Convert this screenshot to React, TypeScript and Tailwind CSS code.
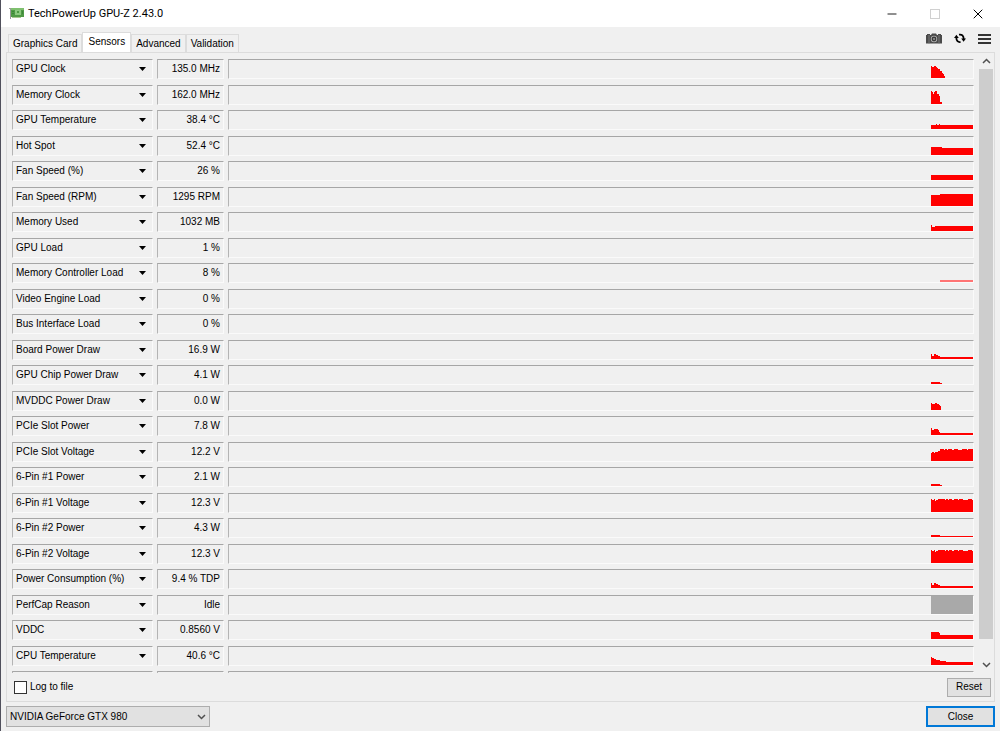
import { useState } from "react";
import { Minus, X } from "lucide-react";

type Step = [x: number, height: number];

interface Sensor {
  name: string;
  value: string;
  steps?: Step[];
  color?: string;
}

const GRAPH_WIDTH = 42;
const GRAPH_HEIGHT = 18;

const sensors: Sensor[] = [
  {
    name: "GPU Clock",
    value: "135.0 MHz",
    steps: [[0, 12], [1, 11], [3, 12], [5, 11], [6, 10], [7, 9], [9, 7], [11, 5], [12, 4], [13, 2], [14, 0]],
  },
  {
    name: "Memory Clock",
    value: "162.0 MHz",
    steps: [[0, 13], [1, 12], [2, 10], [3, 12], [4, 13], [6, 10], [8, 8], [9, 2], [11, 0]],
  },
  { name: "GPU Temperature", value: "38.4 °C", steps: [[0, 4], [5, 5], [6, 4], [8, 5], [9, 4]] },
  { name: "Hot Spot", value: "52.4 °C", steps: [[0, 8], [11, 7]] },
  { name: "Fan Speed (%)", value: "26 %", steps: [[0, 5]] },
  { name: "Fan Speed (RPM)", value: "1295 RPM", steps: [[0, 11], [9, 12]] },
  { name: "Memory Used", value: "1032 MB", steps: [[0, 6], [1, 4], [4, 5]] },
  { name: "GPU Load", value: "1 %" },
  { name: "Memory Controller Load", value: "8 %", steps: [[9, 2]], color: "#ff7474" },
  { name: "Video Engine Load", value: "0 %" },
  { name: "Bus Interface Load", value: "0 %" },
  { name: "Board Power Draw", value: "16.9 W", steps: [[0, 5], [1, 3], [3, 5], [5, 4], [7, 3], [9, 2]] },
  { name: "GPU Chip Power Draw", value: "4.1 W", steps: [[0, 2], [9, 1], [11, 0]] },
  { name: "MVDDC Power Draw", value: "0.0 W", steps: [[0, 7], [1, 6], [4, 7], [6, 6], [8, 5], [9, 4], [10, 0]] },
  { name: "PCIe Slot Power", value: "7.8 W", steps: [[0, 7], [1, 5], [3, 6], [7, 5], [8, 3], [9, 2]] },
  {
    name: "PCIe Slot Voltage",
    value: "12.2 V",
    steps: [[0, 8], [1, 9], [3, 8], [4, 9], [7, 10], [9, 12], [13, 11], [14, 12], [16, 11], [17, 12], [21, 11], [23, 12], [27, 11], [31, 12], [36, 11], [37, 12]],
  },
  { name: "6-Pin #1 Power", value: "2.1 W", steps: [[0, 2], [9, 1], [11, 0]] },
  {
    name: "6-Pin #1 Voltage",
    value: "12.3 V",
    steps: [[0, 13], [1, 12], [3, 13], [4, 11], [5, 12], [7, 13], [14, 12], [15, 13], [17, 12], [18, 13], [21, 12], [23, 13], [27, 12], [28, 13], [32, 12], [37, 13], [41, 12]],
  },
  { name: "6-Pin #2 Power", value: "4.3 W", steps: [[0, 2], [9, 1]] },
  {
    name: "6-Pin #2 Voltage",
    value: "12.3 V",
    steps: [[0, 13], [1, 12], [3, 13], [4, 11], [5, 12], [7, 13], [14, 12], [15, 13], [17, 12], [18, 13], [21, 12], [23, 13], [27, 12], [28, 13], [32, 12], [37, 13], [41, 12]],
  },
  { name: "Power Consumption (%)", value: "9.4 % TDP", steps: [[0, 5], [1, 3], [3, 5], [5, 4], [7, 3], [9, 2]] },
  { name: "PerfCap Reason", value: "Idle", steps: [[0, 18]], color: "#a9a9a9" },
  { name: "VDDC", value: "0.8560 V", steps: [[0, 7], [8, 6], [9, 4]] },
  {
    name: "CPU Temperature",
    value: "40.6 °C",
    steps: [[0, 8], [1, 7], [3, 6], [5, 5], [9, 4], [15, 3]],
  },
  { name: "", value: "" },
];

const tabs = ["Graphics Card", "Sensors", "Advanced", "Validation"];

function stepPath(steps: Step[]) {
  const line = steps
    .map(([x, height]) => `H${x}V${GRAPH_HEIGHT - height}`)
    .join("");
  return `M${steps[0][0]} ${GRAPH_HEIGHT}${line}H${GRAPH_WIDTH}V${GRAPH_HEIGHT}Z`;
}

function SensorRow({ sensor }: { sensor: Sensor }) {
  const sunken =
    "h-5 border border-t-[#a6a6a6] border-l-[#b4b4b4] border-r-[#fafafa] border-b-[#fafafa]";

  return (
    <li className="flex gap-1 odd:mb-1.5 even:mb-[5px]">
      <button
        type="button"
        aria-haspopup="menu"
        className={`${sunken} flex w-[141px] shrink-0 items-center justify-between pl-[3px] pr-1.5 whitespace-nowrap`}
      >
        <span>{sensor.name}</span>
        <svg width="7" height="4" viewBox="0 0 7 4" aria-hidden="true">
          <path d="M0 0h7L3.5 4z" fill="#000" />
        </svg>
      </button>
      <output className={`${sunken} flex w-[67px] shrink-0 items-center justify-end pr-[3px] whitespace-nowrap`}>
        {sensor.value}
      </output>
      <div className={`${sunken} flex min-w-0 flex-1 justify-end`}>
        {sensor.steps && (
          <svg
            width={GRAPH_WIDTH}
            height={GRAPH_HEIGHT}
            viewBox="0 0 42 18"
            shapeRendering="crispEdges"
            aria-hidden="true"
          >
            <path d={stepPath(sensor.steps)} fill={sensor.color ?? "#ff0000"} />
          </svg>
        )}
      </div>
    </li>
  );
}

function CardIcon() {
  return (
    <svg width="15" height="13" viewBox="0 0 15 13" aria-hidden="true">
      <path d="M0 1h2v11H1V2H0z" fill="#9a9a9a" />
      <path d="M2 1h13v9H2z" fill="#4f9a45" />
      <path d="M2 1h13v2H2z" fill="#7fc06f" />
      <path d="M3 10h9v1H3z" fill="#a8c890" />
      <path d="M6 3h6v5H6z" fill="#8cc97f" />
      <path d="M8 4h2v2H8z" fill="#4d9a44" />
      <path d="M3 4h2v1H3zM3 6h2v1H3zM13 4h1v3h-1z" fill="#3c8739" />
    </svg>
  );
}

function CameraIcon() {
  return (
    <svg width="16" height="11" viewBox="0 0 16 11" aria-hidden="true">
      <path d="M1 1h3v1h1l1-1.500h4l1 1.500h1V1h3v1h1v8.500H0V2h1z" fill="#4a4a4a" />
      <path d="M3 2v8.500M13 2v8.500" stroke="#777" />
      <circle cx="8" cy="6" r="3.200" fill="#b4b4b4" />
      <circle cx="8" cy="6" r="2.400" fill="#3a3a3a" />
      <circle cx="8" cy="6" r="1" fill="#999" />
    </svg>
  );
}

function RefreshIcon() {
  return (
    <svg width="12" height="11" viewBox="0 0 12 11" aria-hidden="true">
      <path d="M6.500 9C4 9.400 2.400 8 2.300 4.500" fill="none" stroke="#000" strokeWidth="1.800" />
      <path d="M0 5 2.400 1.800 4.800 5z" fill="#000" />
      <path d="M5 1.700C8 1.200 9.600 2.800 9.700 6" fill="none" stroke="#000" strokeWidth="1.800" />
      <path d="M7.200 5.600H12L9.600 8.800z" fill="#000" />
    </svg>
  );
}

function Chevron({ up = false, className }: { up?: boolean; className?: string }) {
  return (
    <svg width="9" height="6" viewBox="0 0 9 6" className={className} aria-hidden="true">
      <path
        d={up ? "M1 5 4.500 1.500 8 5" : "M1 1 4.500 4.500 8 1"}
        fill="none"
        stroke="currentColor"
        strokeWidth="1.500"
      />
    </svg>
  );
}

export default function App() {
  const [activeTab, setActiveTab] = useState("Sensors");
  const [logToFile, setLogToFile] = useState(false);

  return (
    <div className="flex h-screen flex-col overflow-hidden border-l border-[#50505c] bg-[#f0f0f0] font-['Liberation_Sans',sans-serif] text-[10px] leading-4 text-black">
      {/* Title bar */}
      <header className="flex h-[27px] shrink-0 items-center bg-white pl-2 pr-px">
        <CardIcon />
        <h1 className="ml-1 flex-1 font-[Roboto,sans-serif] text-[11px]">
          TechPowerUp GPU-Z 2.43.0
        </h1>
        <div className="flex items-center">
          <button type="button" aria-label="Minimize" className="flex w-[43px] justify-center">
            <Minus size={14} strokeWidth={1.5} />
          </button>
          <button type="button" aria-label="Maximize" disabled className="flex w-[43px] justify-center">
            <span className="size-2.5 border border-[#d0d0d0]" />
          </button>
          <button type="button" aria-label="Close window" className="flex w-[43px] justify-center">
            <X size={16} strokeWidth={1.5} />
          </button>
        </div>
      </header>

      {/* Tabs and toolbar */}
      <div className="flex h-[25px] shrink-0 items-end justify-between pl-[7px] pr-[9px]">
        <div role="tablist" className="flex items-end">
          {tabs.map((tab) => (
            <button
              key={tab}
              type="button"
              role="tab"
              aria-selected={activeTab === tab}
              onClick={() => setActiveTab(tab)}
              className={
                activeTab === tab
                  ? "h-5 border border-b-0 border-[#dcdcdc] bg-white px-[5px] pb-0.5"
                  : "h-[18px] border border-b-0 border-[#dcdcdc] px-1"
              }
            >
              {tab}
            </button>
          ))}
        </div>
        <div className="flex items-center gap-3 pb-2">
          <button type="button" aria-label="Save screenshot">
            <CameraIcon />
          </button>
          <button type="button" aria-label="Refresh">
            <RefreshIcon />
          </button>
          <button type="button" aria-label="Menu" className="flex w-[13px] flex-col gap-0.5">
            <span className="h-0.5 w-full bg-[#333]" />
            <span className="h-0.5 w-full bg-[#333]" />
            <span className="h-0.5 w-full bg-[#333]" />
          </button>
        </div>
      </div>

      {/* Sensor panel */}
      <main className="mx-[5px] flex min-h-0 flex-1 flex-col border border-[#dcdcdc]">
        <div className="flex min-h-0 flex-1">
          <ul className="min-w-0 flex-1 overflow-hidden pl-[5px] pt-1.5">
            {sensors.map((sensor, i) => (
              <SensorRow key={i} sensor={sensor} />
            ))}
          </ul>
          <div className="ml-[5px] mr-px flex w-[14px] flex-col text-[#505050]">
            <button type="button" aria-label="Scroll up" className="flex h-4 items-center justify-center">
              <Chevron up />
            </button>
            <div className="flex-1">
              <div className="h-[97%] bg-[#cdcdcd]" />
            </div>
            <button type="button" aria-label="Scroll down" className="flex h-4 items-center justify-center">
              <Chevron />
            </button>
          </div>
        </div>
        <div className="flex h-7 shrink-0 items-center justify-between pl-[7px] pr-[3px]">
          <label className="flex items-center gap-[3px]">
            <input
              type="checkbox"
              checked={logToFile}
              onChange={(e) => setLogToFile(e.target.checked)}
              className="size-[13px] appearance-none border border-[#333] bg-white checked:bg-[#333]"
            />
            Log to file
          </label>
          <button type="button" className="h-[19px] w-11 border border-[#adadad] bg-[#e1e1e1]">
            Reset
          </button>
        </div>
      </main>

      {/* Card selection */}
      <footer className="flex shrink-0 items-center justify-between px-[5px] py-1">
        <div className="grid items-center">
          <select
            aria-label="Graphics card"
            className="col-start-1 row-start-1 h-[21px] w-[204px] appearance-none border border-[#adadad] bg-[#e1e1e1] pl-[3px]"
          >
            <option>NVIDIA GeForce GTX 980</option>
          </select>
          <Chevron className="pointer-events-none col-start-1 row-start-1 mr-1 justify-self-end text-[#505050]" />
        </div>
        <button type="button" className="h-[21px] w-[69px] border-2 border-[#0078d7] bg-[#e1e1e1]">
          Close
        </button>
      </footer>
    </div>
  );
}
